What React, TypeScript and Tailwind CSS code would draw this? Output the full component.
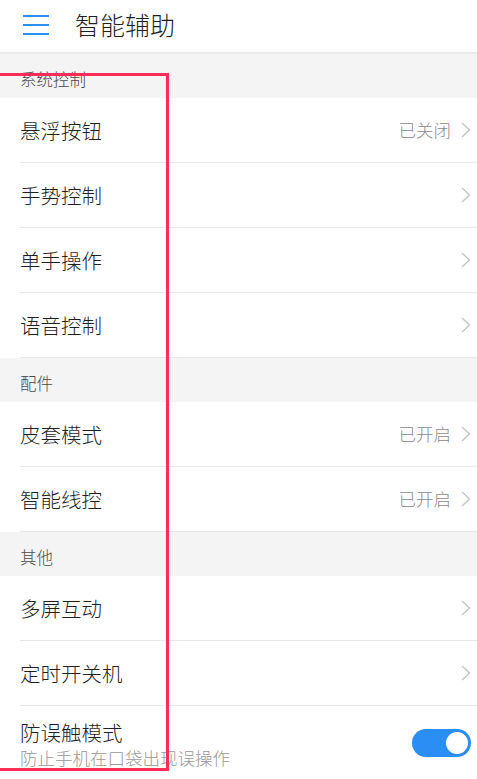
import React from "react";

type Row = { label: string; value?: string };
type Section = { title: string; rows: Row[] };

const sections: Section[] = [
  {
    title: "系统控制",
    rows: [
      { label: "悬浮按钮", value: "已关闭" },
      { label: "手势控制" },
      { label: "单手操作" },
      { label: "语音控制" },
    ],
  },
  {
    title: "配件",
    rows: [
      { label: "皮套模式", value: "已开启" },
      { label: "智能线控", value: "已开启" },
    ],
  },
  {
    title: "其他",
    rows: [{ label: "多屏互动" }, { label: "定时开关机" }],
  },
];

function Chevron() {
  return (
    <svg width="12" height="16" viewBox="0 0 12 16" className="ml-[9px] shrink-0">
      <polyline points="2,1 9.5,8 2,15" fill="none" stroke="#c4c4c4" strokeWidth="1.4" />
    </svg>
  );
}

function SettingRow({ label, value }: Row) {
  return (
    <div className="ml-5 flex h-[65px] items-center border-b border-[#e8e8e8] pr-[5px]">
      <span className="flex-1 text-[20.5px] font-light text-[#1f1f1f]">{label}</span>
      {value && <span className="text-[17.5px] font-light text-[#8a8a8a]">{value}</span>}
      <Chevron />
    </div>
  );
}

export default function App() {
  return (
    <div
      className="relative h-[779px] w-[477px] overflow-hidden bg-white"
      style={{ fontFamily: '"Noto Sans CJK SC", "Noto Sans", sans-serif' }}
    >
      <header className="flex h-[54px] items-center border-b-2 border-[#e9e9e9] bg-white">
        <div className="ml-[23px] flex w-[26px] flex-col gap-[7px] pb-[2px]">
          <span className="h-[2px] bg-[#2b8ef0]" />
          <span className="h-[2px] bg-[#2b8ef0]" />
          <span className="h-[2px] bg-[#2b8ef0]" />
        </div>
        <h1 className="ml-[26px] pb-[3px] text-[25px] font-light text-[#1f1f1f]">智能辅助</h1>
      </header>

      {sections.map((s) => (
        <section key={s.title}>
          <div className="flex h-[44px] items-end bg-[#f4f4f4] pb-[6px] pl-5 text-[16.5px] font-light text-[#4a4a4a]">
            {s.title}
          </div>
          {s.rows.map((r) => (
            <SettingRow key={r.label} {...r} />
          ))}
        </section>
      ))}

      <div className="ml-5 flex h-[73px] items-center pr-[6px]">
        <div className="flex flex-1 flex-col pt-[2px]">
          <span className="text-[20.5px] font-light leading-[28px] text-[#1f1f1f]">防误触模式</span>
          <span className="text-[17.5px] font-light leading-[24px] text-[#999]">防止手机在口袋出现误操作</span>
        </div>
        <div className="flex h-[28px] w-[59px] items-center justify-end rounded-full bg-[#2b8ef5] pr-[3px]">
          <span className="h-[22px] w-[22px] rounded-full bg-white" />
        </div>
      </div>

      <div className="pointer-events-none absolute left-[-4px] top-[73px] h-[698px] w-[173px] border-[3px] border-[#fb2c57]" />
    </div>
  );
}
